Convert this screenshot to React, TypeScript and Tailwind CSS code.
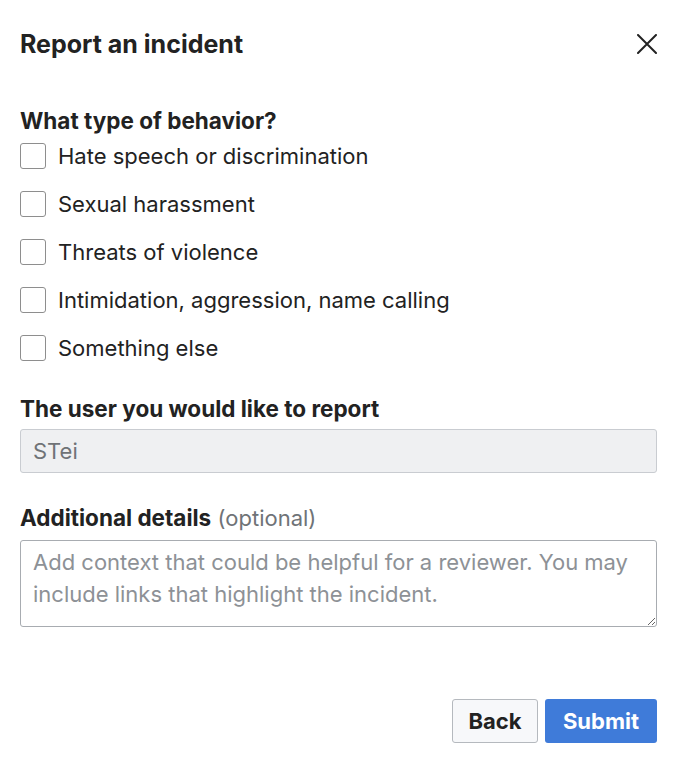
const options = [
  "Hate speech or discrimination",
  "Sexual harassment",
  "Threats of violence",
  "Intimidation, aggression, name calling",
  "Something else",
];

export default function App() {
  return (
    <div className="w-[684px] h-[774px] bg-white text-[#222] font-['Inter',sans-serif] pl-5 pr-[27px]">
      <div className="flex items-center justify-between pt-[28px]">
        <h1 className="text-[25px] font-bold leading-[32px]">Report an incident</h1>
        <button className="text-[#222]">
          <svg width="20" height="20" viewBox="0 0 20 20" fill="none" stroke="currentColor" strokeWidth="2" strokeLinecap="round">
            <path d="M1 1L19 19M19 1L1 19" />
          </svg>
        </button>
      </div>

      <div className="mt-[49px] text-[22.5px] font-bold leading-[24px]">What type of behavior?</div>
      <div className="mt-[10px] flex flex-col gap-[22px]">
        {options.map((o) => (
          <label key={o} className="flex items-center gap-3 text-[22px] leading-[26px] text-[#222]">
            <span className="w-[26px] h-[26px] rounded-[3px] border border-[#8e8e8e] bg-white" />
            {o}
          </label>
        ))}
      </div>

      <div className="mt-[36px] text-[22.5px] font-bold leading-[24px]">The user you would like to report</div>
      <div className="mt-[8px] h-[44px] rounded-[3px] border border-[#c9ccd1] bg-[#eff0f2] px-3 flex items-center text-[22px] text-[#6f7377]">
        STei
      </div>

      <div className="mt-[33px] text-[22.5px] leading-[24px]">
        <span className="font-bold">Additional details</span>{" "}
        <span className="text-[22px] text-[#6f7377]">(optional)</span>
      </div>
      <textarea
        className="mt-[10px] block w-full h-[87px] rounded-[3px] border border-[#a8acb1] px-3 pt-[5px] text-[22px] leading-[32px] placeholder:text-[#8d9196] outline-none"
        placeholder="Add context that could be helpful for a reviewer. You may include links that highlight the incident."
      />

      <div className="mt-[72px] flex justify-end gap-[7px]">
        <button className="h-[44px] w-[86px] rounded-[3px] border border-[#b5b9be] bg-[#f7f8fa] text-[22px] font-bold text-[#222]">
          Back
        </button>
        <button className="h-[44px] w-[112px] rounded-[3px] bg-[#3f7bd9] text-[22px] font-bold text-white">
          Submit
        </button>
      </div>
    </div>
  );
}
